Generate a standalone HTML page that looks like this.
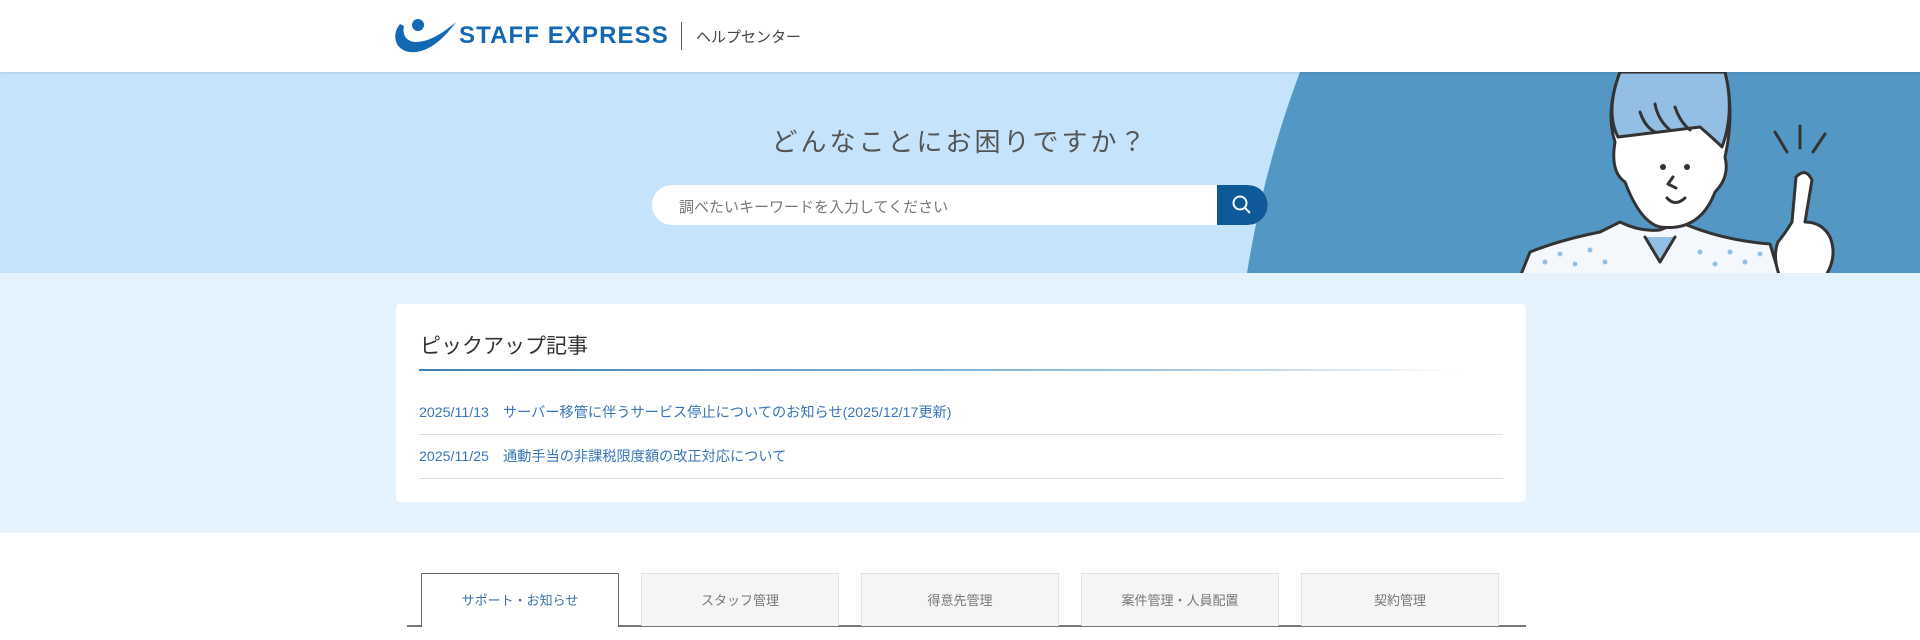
<!DOCTYPE html>
<html><head><meta charset="utf-8">
<style>
*{margin:0;padding:0;box-sizing:border-box}
body{width:1920px;height:640px;overflow:hidden;background:#fff;font-family:"Liberation Sans","Noto Sans CJK JP",sans-serif;position:relative}
.hdr{position:absolute;left:0;top:0;width:1920px;height:72px;background:#fff;box-shadow:0 1px 3px rgba(0,0,0,.12);z-index:3}
.hero{position:absolute;left:0;top:72px;width:1920px;height:201px;background:#c5e4fb;overflow:hidden}
.sec{position:absolute;left:0;top:273px;width:1920px;height:260px;background:#e4f2fd}
.card{position:absolute;left:396px;top:304px;width:1130px;height:198px;background:#fff;border-radius:4px}
.card h2{position:absolute;left:24px;top:26px;font-size:21px;font-weight:normal;color:#333}
.card .ln{position:absolute;left:23px;top:65px;width:1040px;height:2px;background:linear-gradient(90deg,#3f7fb5,#9cc3e2 70%,#fff)}
.item{position:absolute;left:23px;width:1084px;border-bottom:1px solid #ddd;font-size:14.2px;color:#3a75b5;height:44px;line-height:44px}
.item span{margin-right:14px}
.tab{position:absolute;top:573px;width:198px;height:53px;background:#f5f5f5;border:1px solid #e2e2e2;border-bottom:none;text-align:center;line-height:53px;font-size:13px;color:#777}
.tab.a{background:#fff;border:1px solid #666;border-bottom:none;color:#3a6fa8;height:54px;z-index:2}
</style></head><body>
<div class="hdr">
<svg style="position:absolute;left:394px;top:18px" width="62" height="36" viewBox="0 0 62 36"><circle cx="24" cy="7" r="6" fill="#1368b3"/><path d="M6 6 C-4 18 2 36 22 34 C38 32 52 18 62 4 C50 14 36 24 22 24 C12 24 8 16 10 8 Z" fill="#1368b3"/></svg>
<div style="position:absolute;left:459px;top:22px;font-size:24px;font-weight:bold;color:#1368b3;letter-spacing:1.1px">STAFF EXPRESS</div>
<div style="position:absolute;left:681px;top:22px;width:1px;height:28px;background:#555"></div>
<div style="position:absolute;left:696px;top:26px;font-size:15px;color:#444">ヘルプセンター</div>
</div>
<div class="hero">
<svg style="position:absolute;left:0;top:0" width="1920" height="201"><path d="M1300,0 Q1264,95 1247,201 L1920,201 L1920,0 Z" fill="#5398c5"/>
<g stroke="#333" stroke-width="3" fill="none" stroke-linecap="round" stroke-linejoin="round">
<path d="M1520,205 L1530,180 Q1560,168 1600,160 L1620,150 Q1640,160 1660,158 L1680,150 Q1720,168 1770,172 L1780,205 Z" fill="#f4f8fc"/>
<path d="M1645,165 L1660,190 L1675,165" fill="#93bfe4"/>
<path d="M1620,0 Q1605,40 1615,70 Q1610,100 1625,110 Q1640,150 1660,155 Q1700,160 1715,120 Q1730,105 1725,85 Q1735,40 1725,0 Z" fill="#fff"/>
<path d="M1620,0 Q1605,40 1618,65 Q1660,60 1700,55 Q1715,68 1722,75 Q1735,40 1725,0 Z" fill="#93bfe4"/>
<path d="M1640,40 Q1645,55 1655,60 M1655,32 Q1658,48 1670,58 M1675,35 Q1680,50 1690,58"/>
<path d="M1673,105 L1668,112 L1676,116"/><path d="M1667,126 Q1675,135 1685,126"/>
<path d="M1796,105 Q1806,95 1812,108 L1805,150 Q1822,150 1830,165 Q1838,185 1825,205 L1780,205 Q1772,185 1778,170 Q1786,160 1792,150 Z" fill="#fff"/>
<path d="M1775,60 L1787,80 M1800,54 L1800,76 M1825,62 L1813,80"/>
</g>
<g fill="#93bfe4"><circle cx="1545" cy="190" r="2.5"/><circle cx="1560" cy="182" r="2.5"/><circle cx="1575" cy="192" r="2.5"/><circle cx="1590" cy="178" r="2.5"/><circle cx="1605" cy="190" r="2.5"/><circle cx="1700" cy="180" r="2.5"/><circle cx="1715" cy="192" r="2.5"/><circle cx="1730" cy="180" r="2.5"/><circle cx="1745" cy="190" r="2.5"/><circle cx="1760" cy="182" r="2.5"/></g>
<circle cx="1663" cy="95" r="3" fill="#333"/><circle cx="1687" cy="95" r="3" fill="#333"/>
</svg>
<div style="position:absolute;left:0;width:1920px;top:50px;text-align:center;font-size:26px;color:#555;letter-spacing:3px">どんなことにお困りですか？</div>
<div style="position:absolute;left:652px;top:113px;width:616px;height:40px;background:#fff;border-radius:20px;overflow:hidden">
<div style="position:absolute;left:27px;top:11px;font-size:15px;color:#777">調べたいキーワードを入力してください</div>
<div style="position:absolute;right:0;top:0;width:51px;height:40px;background:#0e5a99;border-radius:0 20px 20px 0">
<svg width="51" height="40" viewBox="0 0 51 40"><circle cx="23" cy="18" r="6.5" stroke="#fff" stroke-width="2" fill="none"/><path d="M28 23 L33 28" stroke="#fff" stroke-width="2"/></svg></div>
</div>
</div>
<div class="sec"><div class="card" style="top:31px">
<h2>ピックアップ記事</h2><div class="ln"></div>
<div class="item" style="top:87px"><span>2025/11/13</span>サーバー移管に伴うサービス停止についてのお知らせ(2025/12/17更新)</div>
<div class="item" style="top:131px"><span>2025/11/25</span>通動手当の非課税限度額の改正対応について</div>
</div></div>
<div style="position:absolute;left:407px;top:625px;width:1119px;height:2px;background:#777"></div>
<div class="tab a" style="left:421px">サポート・お知らせ</div>
<div class="tab" style="left:641px">スタッフ管理</div>
<div class="tab" style="left:861px">得意先管理</div>
<div class="tab" style="left:1081px">案件管理・人員配置</div>
<div class="tab" style="left:1301px">契約管理</div>
</body></html>
